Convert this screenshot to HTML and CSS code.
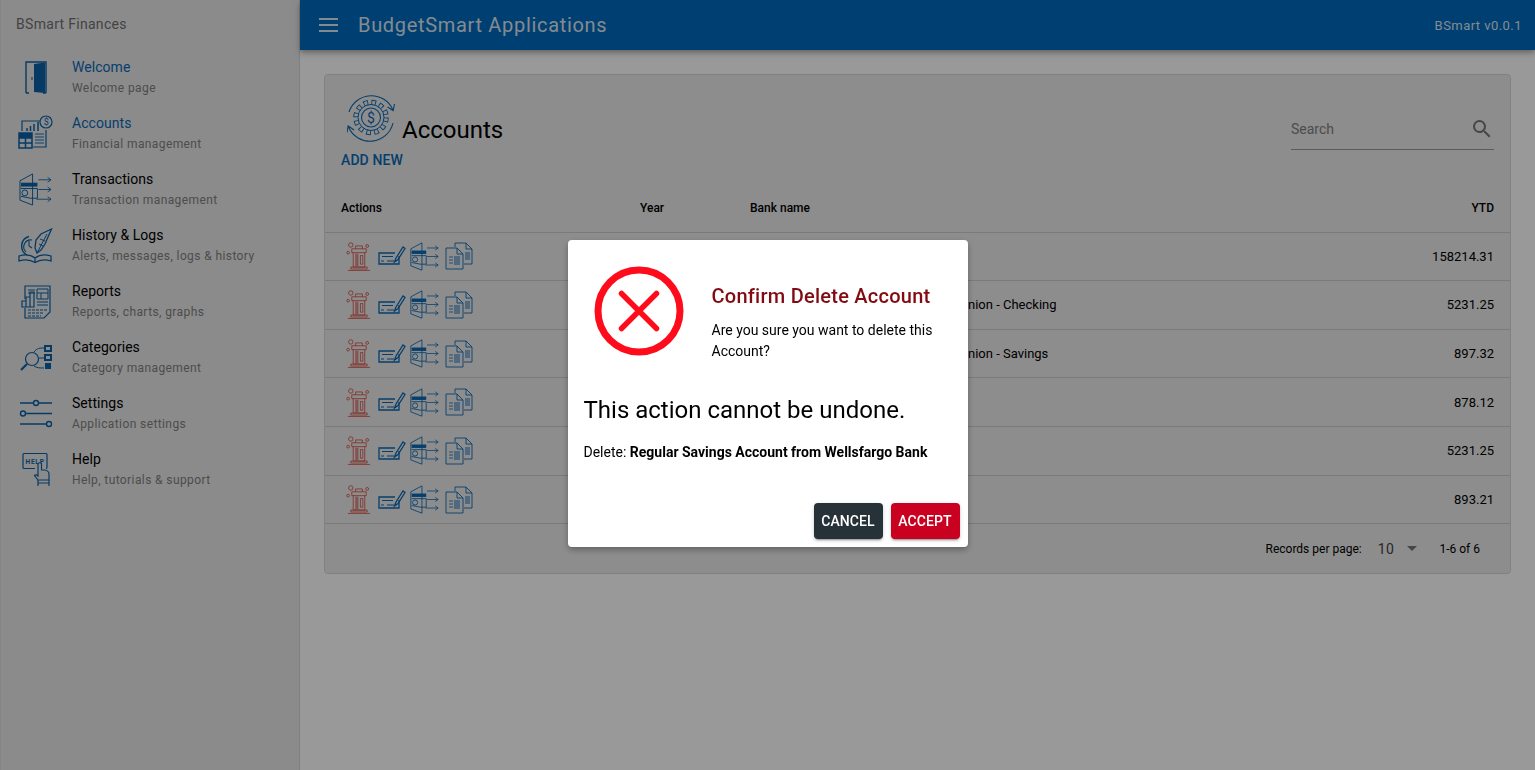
FILE: index.html
```html
<!DOCTYPE html>
<html lang="en">
<head>
    <meta charset="UTF-8">
    <meta name="viewport" content="width=device-width, initial-scale=1.0">
    <title>BudgetSmart Applications</title>
    <link rel="stylesheet" href="styles.css">
</head>
<body>
    <!-- Shared icons -->
    <svg class="icon-defs" aria-hidden="true">
        <symbol id="i-wallet" viewBox="0 0 34 34">
            <path d="M1 8 L14 1 V33 L1 28 Z" fill="none" stroke="currentColor" stroke-width="1"/>
            <path d="M2 10 H19 V14 H2 Z" fill="currentColor"/>
            <path d="M2 16 H19 V26 H12 L2 24" fill="none" stroke="currentColor" stroke-width="1"/>
            <circle cx="6" cy="20.500" r="3" fill="none" stroke="currentColor" stroke-width="1"/>
            <path d="M20 7 H33 M29.500 4.500 L33 7 L29.500 9.500 M20 17 H33 M29.500 14.500 L33 17 L29.500 19.500 M18 27 H33 M29.500 24.500 L33 27 L29.500 29.500" fill="none" stroke="currentColor" stroke-width=".9"/>
        </symbol>
        <symbol id="i-trash" viewBox="0 0 26 30">
            <circle cx="5" cy="3" r="2.300" fill="none" stroke="currentColor" stroke-width=".8"/>
            <circle cx="22" cy="4" r="1.500" fill="none" stroke="currentColor" stroke-width=".8"/>
            <circle cx="2.200" cy="11" r="1.400" fill="none" stroke="currentColor" stroke-width=".8"/>
            <path d="M10 7 V4 H17 V7 M6 7 H21 V11 H6 Z M7.500 11 V26 H19.500 V11 M5 26 H22 V28 H5 Z M2 29.500 H25" fill="none" stroke="currentColor" stroke-width=".8"/>
            <path d="M9.500 12 H13 V25 H9.500 Z" fill="currentColor" opacity=".55"/>
            <path d="M15 14 H17.500 V23 H15 Z" fill="none" stroke="currentColor" stroke-width=".8"/>
        </symbol>
        <symbol id="i-check" viewBox="0 0 28 24">
            <path d="M17 9 H1 V20 H21 V12" fill="none" stroke="currentColor" stroke-width="1.300"/>
            <path d="M4 12.500 H15 M9 17 H16 M3 17 H6" fill="none" stroke="currentColor" stroke-width="1"/>
            <path d="M16.500 18 L18 14 L25 3 L27 4.500 L20 15.500 Z" fill="none" stroke="currentColor" stroke-width="1.300"/>
        </symbol>
        <symbol id="i-docs" viewBox="0 0 28 28">
            <path d="M10 5 V1 H21 L27 7 V22 H19" fill="none" stroke="currentColor" stroke-width=".9"/>
            <path d="M1 6 H12 L18 12 V27 H1 Z M12 6 V12 H18 M21 1 V7 H27" fill="none" stroke="currentColor" stroke-width=".9"/>
            <path d="M4 15 H8 M4 18 H8 M4 21 H8" fill="none" stroke="currentColor" stroke-width=".8"/>
            <path d="M9 14 H15 V23 H9 Z M20 10 H25 V18 H20 Z" fill="currentColor" opacity=".45"/>
        </symbol>
    </svg>

    <div class="app">
        <aside class="sidebar">
            <div class="brand">BSmart Finances</div>
            <nav>
                <a class="nav-item active">
                    <svg class="nav-icon" viewBox="0 0 40 40">
                        <path d="M11 35 V4 H31 V35 M11 35 H14 M28 35 H31" fill="none" stroke="currentColor" stroke-width="1.400"/>
                        <path d="M19 6 L30 4.500 V35 L19 34 Z" fill="currentColor"/>
                        <path d="M17 19 V22" stroke="currentColor" stroke-width="1"/>
                    </svg>
                    <span class="nav-text"><span class="nav-title">Welcome</span><span class="nav-sub">Welcome page</span></span>
                </a>
                <a class="nav-item active">
                    <svg class="nav-icon" viewBox="0 0 40 40">
                        <path d="M7 17 V7 H25" fill="none" stroke="currentColor" stroke-width="1.200"/>
                        <circle cx="31" cy="8" r="6" fill="none" stroke="currentColor" stroke-width="1.200"/>
                        <text x="28.800" y="11" class="nav-icon-dollar">$</text>
                        <path d="M12 14 V17 M15.500 12 V17 M19 10 V17 M23 8 V17" stroke="currentColor" stroke-width="1.500"/>
                        <path d="M4 19 H17 V34 H4 Z M4 24 H17 M4 29 H17 M10.500 24 V34" fill="none" stroke="currentColor" stroke-width="1.500"/>
                        <path d="M4 19 H17 V24 H4 Z" fill="currentColor"/>
                        <path d="M20 20 H29 M20 23 H29 M20 26 H29 M20 29 H29" stroke="currentColor" stroke-width=".9"/>
                        <path d="M18 33 H31 V16" fill="none" stroke="currentColor" stroke-width="1.200"/>
                    </svg>
                    <span class="nav-text"><span class="nav-title">Accounts</span><span class="nav-sub">Financial management</span></span>
                </a>
                <a class="nav-item">
                    <svg class="nav-icon"><use href="#i-wallet" x="4" y="3" width="33" height="33"/></svg>
                    <span class="nav-text"><span class="nav-title">Transactions</span><span class="nav-sub">Transaction management</span></span>
                </a>
                <a class="nav-item">
                    <svg class="nav-icon" viewBox="0 0 40 40">
                        <path d="M14 10.500 A10 10 0 0 0 12 29" fill="none" stroke="currentColor" stroke-width="1.400"/>
                        <path d="M17 14 A7 7 0 0 0 11 26" fill="none" stroke="currentColor" stroke-width="1.100"/>
                        <path d="M14 15 V20 L17 22" fill="none" stroke="currentColor" stroke-width="1.100"/>
                        <path d="M36.500 3 L26 8 L21 14 L20 22 L22 27 L26 24 L30 18 L33 11 Z" fill="none" stroke="currentColor" stroke-width="1.300"/>
                        <path d="M22 27 L32 8 M24 18 L28 20 M25 13 L30 15" fill="none" stroke="currentColor" stroke-width="1"/>
                        <path d="M4 30 C10 28 16 29 20 32 C24 29 30 28 36 30 V35 C30 33 24 34 20 36.500 C16 34 10 33 4 35 Z M20 32 V36.500" fill="none" stroke="currentColor" stroke-width="1.300"/>
                    </svg>
                    <span class="nav-text"><span class="nav-title">History &amp; Logs</span><span class="nav-sub">Alerts, messages, logs &amp; history</span></span>
                </a>
                <a class="nav-item">
                    <svg class="nav-icon" viewBox="0 0 40 40">
                        <path d="M10 17 V4 H35 V30 L29 36 H10 V26" fill="none" stroke="currentColor" stroke-width="1.200"/>
                        <path d="M22 7 H33 V17 H22 Z M22 11 H33 M26 11 V17" fill="none" stroke="currentColor" stroke-width="1"/>
                        <path d="M13 8 H20 M13 11 H20 M22 20 H33 M22 23 H33" stroke="currentColor"/>
                        <path d="M7 25 V19 H11 V15 H15 V10 H19 V25 Z M11 19 V25 M15 15 V25" fill="none" stroke="currentColor" stroke-width="1.200"/>
                        <path d="M13 28 H32 M13 31 H28 M13 34 H26" stroke="currentColor" stroke-dasharray="3 1"/>
                    </svg>
                    <span class="nav-text"><span class="nav-title">Reports</span><span class="nav-sub">Reports, charts, graphs</span></span>
                </a>
                <a class="nav-item">
                    <svg class="nav-icon" viewBox="0 0 40 40">
                        <circle cx="17" cy="21" r="6.500" fill="none" stroke="currentColor" stroke-width="1.200"/>
                        <path d="M12 26 L6 32" stroke="currentColor" stroke-width="2.200"/>
                        <path d="M19 14 C22 10 25 10 29 10 M24 20 H29 M19 28 C22 30 25 30 29 30" fill="none" stroke="currentColor"/>
                        <path d="M30 8 H36 V13 H30 Z M30 17 H36 V22 H30 Z" fill="none" stroke="currentColor" stroke-width="2"/>
                        <path d="M30 25 H36 V31 H30 Z" fill="currentColor"/>
                    </svg>
                    <span class="nav-text"><span class="nav-title">Categories</span><span class="nav-sub">Category management</span></span>
                </a>
                <a class="nav-item">
                    <svg class="nav-icon" viewBox="0 0 40 40">
                        <path d="M5 9 H18 M24 9 H37 M11 19.500 H37 M5 30 H31" stroke="currentColor" stroke-width="1.400"/>
                        <circle cx="21" cy="9" r="2.500" fill="none" stroke="currentColor" stroke-width="1.400"/>
                        <circle cx="8" cy="19.500" r="2.500" fill="none" stroke="currentColor" stroke-width="1.400"/>
                        <circle cx="34" cy="30" r="2.500" fill="none" stroke="currentColor" stroke-width="1.400"/>
                    </svg>
                    <span class="nav-text"><span class="nav-title">Settings</span><span class="nav-sub">Application settings</span></span>
                </a>
                <a class="nav-item">
                    <svg class="nav-icon" viewBox="0 0 40 40">
                        <path d="M20 18.500 H9 Q8 18.500 8 17.500 V4.500 Q8 3.500 9 3.500 H31 Q32 3.500 32 4.500 V17.500 Q32 18.500 31 18.500" fill="none" stroke="currentColor" stroke-width="1.200"/>
                        <text x="10.500" y="14" class="nav-icon-help">HELP</text>
                        <path d="M23 26 V13.500 Q25 12 26.500 13.500 V20 L30 20 Q34 21 34 24 V30 H23 L19.500 25.500 Q21 24 23 26 Z" fill="#e8e8e8" stroke="currentColor" stroke-width="1.200"/>
                        <path d="M23 30 V36 M34 30 V36 M23 33 H34" fill="none" stroke="currentColor" stroke-width="1.200"/>
                    </svg>
                    <span class="nav-text"><span class="nav-title">Help</span><span class="nav-sub">Help, tutorials &amp; support</span></span>
                </a>
            </nav>
        </aside>

        <div class="main">
            <header class="topbar">
                <span class="menu-btn"><i></i><i></i><i></i></span>
                <span class="app-title">BudgetSmart Applications</span>
                <span class="version">BSmart v0.0.1</span>
            </header>

            <main class="content">
                <section class="card">
                    <div class="card-head">
                        <div class="card-title-block">
                            <div class="card-title">
                                <svg class="gear" viewBox="0 0 50 48">
                                    <path d="M2 18 A23.500 23.500 0 0 1 46 16 M40.500 13 L46.200 16.500 L47.500 10" fill="none" stroke="currentColor" stroke-width="1.100"/>
                                    <path d="M46 29 A23.500 23.500 0 0 1 1.500 33 M7 36 L1.200 32 L0 38.500" fill="none" stroke="currentColor" stroke-width="1.100"/>
                                    <circle class="gear-teeth" cx="24" cy="23.500" r="15"/>
                                    <circle class="gear-cut" cx="24" cy="23.500" r="15"/>
                                    <circle class="gear-body" cx="24" cy="23.500" r="13"/>
                                    <circle cx="24" cy="23.500" r="9.500" fill="none" stroke="currentColor" stroke-width="1.100"/>
                                    <text x="24" y="29" class="gear-dollar">$</text>
                                </svg>
                                <h1>Accounts</h1>
                            </div>
                            <a class="add-new">ADD NEW</a>
                        </div>
                        <div class="search">
                            <span>Search</span>
                            <svg viewBox="0 0 24 24"><path d="M15.500 14h-.79l-.28-.27A6.470 6.470 0 0 0 16 9.500 6.500 6.500 0 1 0 9.500 16c1.610 0 3.090-.59 4.230-1.570l.27.28v.79l5 4.990L20.490 19l-4.990-5zm-6 0C7.010 14 5 11.990 5 9.500S7.010 5 9.500 5 14 7.010 14 9.500 11.990 14 9.500 14z"/></svg>
                        </div>
                    </div>

                    <table>
                        <thead>
                            <tr>
                                <th class="col-actions">Actions</th>
                                <th class="col-year">Year</th>
                                <th>Bank name</th>
                                <th class="num">YTD</th>
                            </tr>
                        </thead>
                        <tbody id="accountRows"></tbody>
                    </table>

                    <div class="card-foot">
                        <span>Records per page:</span>
                        <span class="per-page">10</span>
                        <span class="caret"></span>
                        <span class="range">1-6 of 6</span>
                    </div>
                </section>
            </main>
        </div>
    </div>

    <div class="scrim">
        <div class="dialog">
            <div class="dialog-head">
                <svg class="dialog-icon" viewBox="0 0 90 90">
                    <circle cx="45" cy="45" r="41" fill="none" stroke="currentColor" stroke-width="7"/>
                    <path d="M27.500 27.500 L62.500 62.500 M62.500 27.500 L27.500 62.500" stroke="currentColor" stroke-width="5.500" stroke-linecap="round"/>
                </svg>
                <div class="dialog-text">
                    <h2>Confirm Delete Account</h2>
                    <p>Are you sure you want to delete this Account?</p>
                </div>
            </div>
            <div class="dialog-warning">This action cannot be undone.</div>
            <div class="dialog-target">Delete: <strong>Regular Savings Account from Wellsfargo Bank</strong></div>
            <div class="dialog-actions">
                <button class="btn-cancel">CANCEL</button>
                <button class="btn-accept">ACCEPT</button>
            </div>
        </div>
    </div>

    <script>
        // Table rows: only the part of the bank name that shows past the dialog
        const accounts = [
            { bank: '', ytd: '158214.31' },
            { bank: 'nion - Checking', ytd: '5231.25' },
            { bank: 'nion - Savings', ytd: '897.32' },
            { bank: '', ytd: '878.12' },
            { bank: '', ytd: '5231.25' },
            { bank: '', ytd: '893.21' }
        ];

        const actionIcons = `
            <svg class="act act-trash"><use href="#i-trash"/></svg>
            <svg class="act act-check"><use href="#i-check"/></svg>
            <svg class="act act-wallet"><use href="#i-wallet"/></svg>
            <svg class="act act-docs"><use href="#i-docs"/></svg>
        `;

        const tableBody = document.getElementById('accountRows');
        accounts.forEach(account => {
            const row = document.createElement('tr');
            row.innerHTML = `
                <td><div class="actions">${actionIcons}</div></td>
                <td></td>
                <td class="bank">${account.bank}</td>
                <td class="num">${account.ytd}</td>
            `;
            tableBody.appendChild(row);
        });
    </script>
</body>
</html>
```

FILE: styles.css
```css
* {
    box-sizing: border-box;
}

body {
    margin: 0;
    height: 770px;
    overflow: hidden;
    font-family: 'Roboto', sans-serif;
    background-color: #fff;
    color: #000;
}

.icon-defs {
    display: none;
}

.app {
    display: flex;
    height: 770px;
}

/* Sidebar */
.sidebar {
    width: 300px;
    flex-shrink: 0;
    background-color: #e8e8e8;
    border-left: 1px solid #ddd;
    border-right: 1px solid #d4d4d4;
}

.brand {
    height: 50px;
    padding: 16px 0 0 15px;
    font-size: 14px;
    line-height: 17px;
    letter-spacing: 0.3px;
    color: #707070;
}

.nav-item {
    display: flex;
    align-items: center;
    height: 56px;
    padding-left: 14px;
    color: #000;
}

.nav-icon {
    width: 40px;
    height: 40px;
    flex-shrink: 0;
    margin-right: 17px;
    color: #0a62a8;
}

.nav-icon-dollar {
    font-size: 9px;
    font-family: 'Roboto', sans-serif;
    fill: currentColor;
}

.nav-icon-help {
    font-size: 6.500px;
    font-weight: 700;
    letter-spacing: 0.8px;
    font-family: 'Roboto', sans-serif;
    fill: currentColor;
}

.nav-text {
    display: flex;
    flex-direction: column;
    gap: 6px;
}

.nav-title {
    font-size: 14px;
    line-height: 15px;
    letter-spacing: 0.05px;
}

.nav-sub {
    font-size: 12px;
    line-height: 15px;
    letter-spacing: 0.4px;
    color: #808080;
}

.nav-item.active .nav-title {
    color: #0a69b4;
}

/* Top bar */
.main {
    flex: 1;
    min-width: 0;
    display: flex;
    flex-direction: column;
}

.topbar {
    height: 50px;
    flex-shrink: 0;
    display: flex;
    align-items: center;
    padding: 0 13px 0 19px;
    background-color: #0069be;
    box-shadow: 0 2px 4px -1px rgba(0,0,0,.2), 0 4px 5px rgba(0,0,0,.14), 0 1px 10px rgba(0,0,0,.12);
    color: #dce6f0;
}

.menu-btn {
    display: flex;
    flex-direction: column;
    gap: 4px;
    width: 19px;
    margin-right: 20px;
}

.menu-btn i {
    display: block;
    height: 2px;
    background-color: #dce6f0;
}

.app-title {
    font-size: 20px;
    letter-spacing: 0.68px;
}

.version {
    margin-left: auto;
    font-size: 13px;
    letter-spacing: 0.45px;
}

/* Accounts card */
.content {
    flex: 1;
    padding: 24px 24px 0 24px;
}

.card {
    background-color: #ebebeb;
    border: 1px solid #d8d8d8;
    border-radius: 4px;
}

.card-head {
    display: flex;
    justify-content: space-between;
    height: 109px;
    padding: 19px 16px 0 16px;
}

.card-title {
    display: flex;
    align-items: flex-end;
    gap: 5px;
    padding-left: 6px;
}

.gear {
    width: 50px;
    height: 48px;
    color: #0a69b4;
}

.gear-teeth {
    fill: none;
    stroke: currentColor;
    stroke-width: 5.500;
    stroke-dasharray: 4.500 3.354;
}

.gear-cut {
    fill: none;
    stroke: #ebebeb;
    stroke-width: 3.800;
    stroke-dasharray: 2.800 5.054;
    stroke-dashoffset: -0.850;
}

.gear-body {
    fill: #ebebeb;
    stroke: currentColor;
    stroke-width: 1;
}

.gear-dollar {
    font-size: 14px;
    text-anchor: middle;
    font-family: 'Roboto', sans-serif;
    fill: currentColor;
}

h1 {
    margin: 0;
    font-size: 24px;
    font-weight: 400;
    line-height: 24px;
}

.add-new {
    display: block;
    margin-top: 10px;
    font-size: 14px;
    font-weight: 500;
    line-height: 16px;
    letter-spacing: 0.1px;
    color: #0a69b4;
}

.search {
    display: flex;
    align-items: center;
    justify-content: space-between;
    width: 203px;
    height: 56px;
    padding-top: 14px;
    border-bottom: 1px solid #999;
    font-size: 14px;
    color: #808080;
}

.search svg {
    width: 24px;
    height: 24px;
    fill: #757575;
}

table {
    width: 100%;
    border-collapse: collapse;
}

th, td {
    padding: 0 16px;
    text-align: left;
    font-size: 13px;
    white-space: nowrap;
}

th {
    height: 48px;
    font-size: 12px;
    font-weight: 500;
    border-bottom: 1px solid #ccc;
}

td {
    height: 48.670px;
    border-bottom: 1px solid #ccc;
}

.col-actions {
    width: 299px;
}

.col-year {
    width: 110px;
}

th.num, td.num {
    text-align: right;
}

.bank {
    text-indent: 218px;
}

.actions {
    display: flex;
    align-items: center;
    padding-left: 5px;
    color: #0a69b4;
}

.act {
    display: block;
}

.act-trash {
    width: 25px;
    height: 29px;
    margin-right: 7px;
    color: #d2453a;
}

.act-check {
    width: 28px;
    height: 24px;
    margin-right: 4px;
}

.act-wallet {
    width: 29px;
    height: 29px;
    margin-right: 6px;
}

.act-docs {
    width: 28px;
    height: 28px;
}

.card-foot {
    display: flex;
    align-items: center;
    justify-content: flex-end;
    height: 49px;
    padding-right: 30px;
    font-size: 12px;
}

.per-page {
    margin-left: 16px;
    font-size: 14px;
    letter-spacing: 0.5px;
    color: #444;
}

.caret {
    width: 0;
    height: 0;
    margin-left: 13px;
    border-left: 5px solid transparent;
    border-right: 5px solid transparent;
    border-top: 5px solid #757575;
}

.range {
    margin-left: 22px;
}

/* Delete dialog */
.scrim {
    position: fixed;
    inset: 0;
    display: flex;
    justify-content: center;
    align-items: flex-start;
    padding-top: 240px;
    background-color: rgba(0, 0, 0, 0.4);
}

.dialog {
    width: 400px;
    height: 307px;
    padding: 0 8px 8px 16px;
    display: flex;
    flex-direction: column;
    background-color: #fff;
    border-radius: 4px;
    box-shadow: 0 3px 6px rgba(0,0,0,.3);
}

.dialog-head {
    display: flex;
    align-items: flex-start;
    gap: 28px;
    padding: 26px 0 0 10px;
}

.dialog-icon {
    width: 90px;
    height: 90px;
    flex-shrink: 0;
    color: #ff0c1c;
}

.dialog-text {
    padding-top: 18px;
}

h2 {
    margin: 0 0 12px;
    font-size: 20px;
    font-weight: 500;
    line-height: 24px;
    letter-spacing: 0.25px;
    color: #820b12;
}

p {
    margin: 0;
    padding-right: 20px;
    font-size: 14px;
    line-height: 21px;
}

.dialog-warning {
    margin-top: 32px;
    font-size: 24px;
    line-height: 32px;
}

.dialog-target {
    margin-top: 16px;
    font-size: 14px;
    line-height: 20px;
}

.dialog-target strong {
    font-weight: 700;
}

.dialog-actions {
    margin-top: auto;
    display: flex;
    justify-content: flex-end;
    gap: 8px;
}

button {
    width: 69px;
    height: 36px;
    border: none;
    border-radius: 4px;
    padding: 0;
    font-family: 'Roboto', sans-serif;
    font-size: 14px;
    font-weight: 500;
    letter-spacing: 0.1px;
    color: #fff;
    box-shadow: 0 3px 1px -2px rgba(0,0,0,.2), 0 2px 2px rgba(0,0,0,.14), 0 1px 5px rgba(0,0,0,.12);
}

.btn-cancel {
    background-color: #263238;
}

.btn-accept {
    background-color: #c9001f;
}
```
